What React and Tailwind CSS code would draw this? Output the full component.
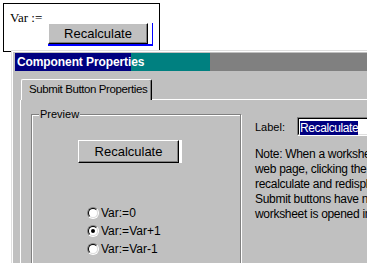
function Radio({ checked, label }) {
  return (
    <div className="flex items-center h-[18px] gap-[2px]">
      <div className="w-[12px] h-[12px] rounded-full border border-t-[#808080] border-l-[#808080] border-r-white border-b-white">
        <div className="w-full h-full rounded-full border border-t-black border-l-black border-r-[#dfdfdf] border-b-[#dfdfdf] bg-white flex items-center justify-center">
          {checked && <div className="w-[4px] h-[4px] rounded-full bg-black" />}
        </div>
      </div>
      <span className="text-[12px] leading-[14px] whitespace-nowrap">{label}</span>
    </div>
  );
}

export default function App() {
  return (
    <div className="relative w-[367px] h-[263px] overflow-hidden bg-white font-['Liberation_Sans',Arial,sans-serif] text-black">
      <div className="ml-[3px] mt-[3px] w-[157px] h-[49px] border border-black bg-white flex items-start pl-[6px]">
        <div className="w-[38px] mt-[6px] font-['Liberation_Serif','Times_New_Roman',serif] text-[13px] leading-[15px] whitespace-nowrap">
          Var :=
        </div>
        <div className="mt-[19px] pr-[4px] border-r border-b-2 border-[#0000ff]">
          <div className="w-[100px] h-[21px] bg-[#c0c0c0] border border-t-white border-l-white border-r-black border-b-black shadow-[inset_-1px_-1px_0_#808080] flex items-center justify-center text-[13px] leading-none">
            Recalculate
          </div>
        </div>
      </div>

      <div className="relative ml-[11px] -mt-[2px] w-[420px] h-[240px] border-t border-l border-[#dfdfdf]">
        <div className="h-full border-t border-l border-white bg-[#c0c0c0] pt-[1px] pl-[2px]">
          <div className="h-[18px] bg-[linear-gradient(to_right,#000080_116px,#008080_116px,#008080_195px,#808080_195px)] pl-[2px] text-white font-bold text-[12px] leading-[18px] tracking-[-0.1px] whitespace-nowrap">
            Component Properties
          </div>
          <div className="pt-[8px] pl-[5px]">
            <div className="flex items-end h-[21px]">
              <div className="ml-[1px] w-[131px] h-[21px] border-t border-l border-r border-t-white border-l-white border-r-black rounded-t-[2px] shadow-[inset_-1px_0_0_#808080] flex items-center pl-[7px] text-[11.5px] tracking-[-0.4px] whitespace-nowrap">
                Submit Button Properties
              </div>
              <div className="flex-1 border-b border-white" />
            </div>
            <div className="border-l border-white h-[200px] flex pl-[10px] pt-[14px]">
              <div className="relative shrink-0 w-[210px] h-[200px] border border-[#808080] shadow-[1px_1px_0_#fff,inset_1px_1px_0_#fff] pl-[46px] pt-[25px]">
                <div className="absolute -top-[8px] left-[7px] px-[1px] bg-[#c0c0c0] text-[11px] leading-[14px]">
                  Preview
                </div>
                <div className="flex">
                  <div className="w-[101px] h-[23px] bg-[#c0c0c0] border border-t-white border-l-white border-r-black border-b-black shadow-[inset_-1px_-1px_0_#808080] flex items-center justify-center text-[13px] leading-none">
                    Recalculate
                  </div>
                  <div className="w-[3px] h-[23px] bg-white" />
                </div>
                <div className="mt-[41px] ml-[9px] flex flex-col">
                  <Radio label="Var:=0" />
                  <Radio label="Var:=Var+1" checked />
                  <Radio label="Var:=Var-1" />
                </div>
              </div>
              <div className="ml-[14px] pt-[3px] text-[12px] tracking-[-0.3px]">
                <div className="flex items-center">
                  <div className="w-[42px] leading-[14px] text-[11px] tracking-normal">Label:</div>
                  <div className="w-[110px] h-[19px] border border-t-[#808080] border-l-[#808080] border-r-white border-b-white">
                    <div className="h-full border border-t-black border-l-black border-r-[#dfdfdf] border-b-[#dfdfdf] bg-white pl-[1px]">
                      <span className="inline-block bg-[#000080] text-white leading-[14px] tracking-[-0.4px]">Recalculate</span>
                    </div>
                  </div>
                </div>
                <div className="mt-[11px] leading-[15px] whitespace-nowrap">
                  <div>Note: When a worksheet is exported as a</div>
                  <div>web page, clicking the submit button will</div>
                  <div>recalculate and redisplay the page.</div>
                  <div>Submit buttons have no effect when the</div>
                  <div>worksheet is opened in Mathcad.</div>
                </div>
              </div>
            </div>
          </div>
        </div>
      </div>
    </div>
  );
}
